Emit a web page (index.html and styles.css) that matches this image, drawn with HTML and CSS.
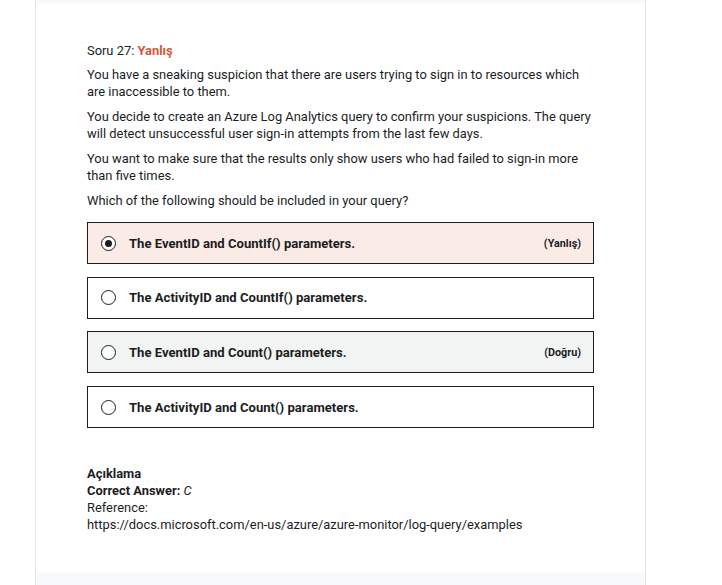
FILE: index.html
```html
<!DOCTYPE html>
<html>
<head>
<meta charset="utf-8">
<link rel="stylesheet" href="styles.css">
</head>
<body>
<div class="card">
  <div class="strip"></div>
  <div class="content">
    <div class="qhead">Soru 27: <span class="wrong">Yanlış</span></div>
    <p>You have a sneaking suspicion that there are users trying to sign in to resources which are inaccessible to them.</p>
    <p>You decide to create an Azure Log Analytics query to confirm your suspicions. The query will detect unsuccessful user sign-in attempts from the last few days.</p>
    <p>You want to make sure that the results only show users who had failed to sign-in more than five times.</p>
    <p>Which of the following should be included in your query?</p>
    <ul class="options">
      <li class="opt opt-wrong"><span class="radio checked"></span><span class="label">The EventID and CountIf() parameters.</span><span class="tag">(Yanlış)</span></li>
      <li class="opt"><span class="radio"></span><span class="label">The ActivityID and CountIf() parameters.</span></li>
      <li class="opt opt-right"><span class="radio"></span><span class="label">The EventID and Count() parameters.</span><span class="tag">(Doğru)</span></li>
      <li class="opt"><span class="radio"></span><span class="label">The ActivityID and Count() parameters.</span></li>
    </ul>
    <div class="explain">
      <div class="ehead">Açıklama</div>
      <div class="ans"><b>Correct Answer:</b> <i>C</i></div>
      <div class="ref">Reference:</div>
      <div class="ref">https://docs.microsoft.com/en-us/azure/azure-monitor/log-query/examples</div>
    </div>
  </div>
  <div class="footer"></div>
</div>
</body>
</html>
```
FILE: styles.css
```css
html, body {
  margin: 0;
  padding: 0;
  background: #ffffff;
}
body {
  font-family: Roboto, "Liberation Sans", sans-serif;
  color: #1c1d1f;
  font-size: 12.9px;
  height: 585px;
  overflow: hidden;
}
.card {
  margin-left: 36px;
  width: 609px;
  background: #fff;
  box-shadow: 0 0 0 1px #e4e5e7, 0 1px 3px rgba(0,0,0,0.06);
  height: 600px;
  display: flex;
  flex-direction: column;
}
.strip {
  height: 3px;
  background: #f7f9fa;
}
.content {
  padding: 39px 51px 0 51px;
  height: 531px;
}
.qhead {
  line-height: 17px;
  margin-bottom: 7px;
}
.wrong {
  color: #d0583c;
  font-weight: 700;
}
p {
  margin: 0 0 8px 0;
  line-height: 17px;
}
.options {
  list-style: none;
  margin: 13px 0 0 0;
  padding: 0;
  display: flex;
  flex-direction: column;
  gap: 12.7px;
  width: 507px;
}
.opt {
  box-sizing: border-box;
  height: 42px;
  border: 1px solid #1c1d1f;
  display: flex;
  align-items: center;
  padding: 0 12px 0 13px;
  font-weight: 700;
  font-size: 13.1px;
}
.opt-wrong { background: #fbebe7; }
.opt-right { background: #f1f4f3; }
.radio {
  box-sizing: border-box;
  width: 15px;
  height: 15px;
  border: 1.5px solid #1c1d1f;
  border-radius: 50%;
  margin-right: 13px;
  display: flex;
  align-items: center;
  justify-content: center;
  background: #fff;
  flex: none;
}
.radio.checked::after {
  content: "";
  width: 7px;
  height: 7px;
  border-radius: 50%;
  background: #1c1d1f;
}
.label { flex: 1; }
.tag {
  font-size: 10.8px;
  font-weight: 700;
}
.explain {
  margin-top: 37px;
  line-height: 17px;
}
.ehead, .ans b { font-weight: 700; }
.footer {
  flex: 1;
  background: #f7f9fa;
}
```
